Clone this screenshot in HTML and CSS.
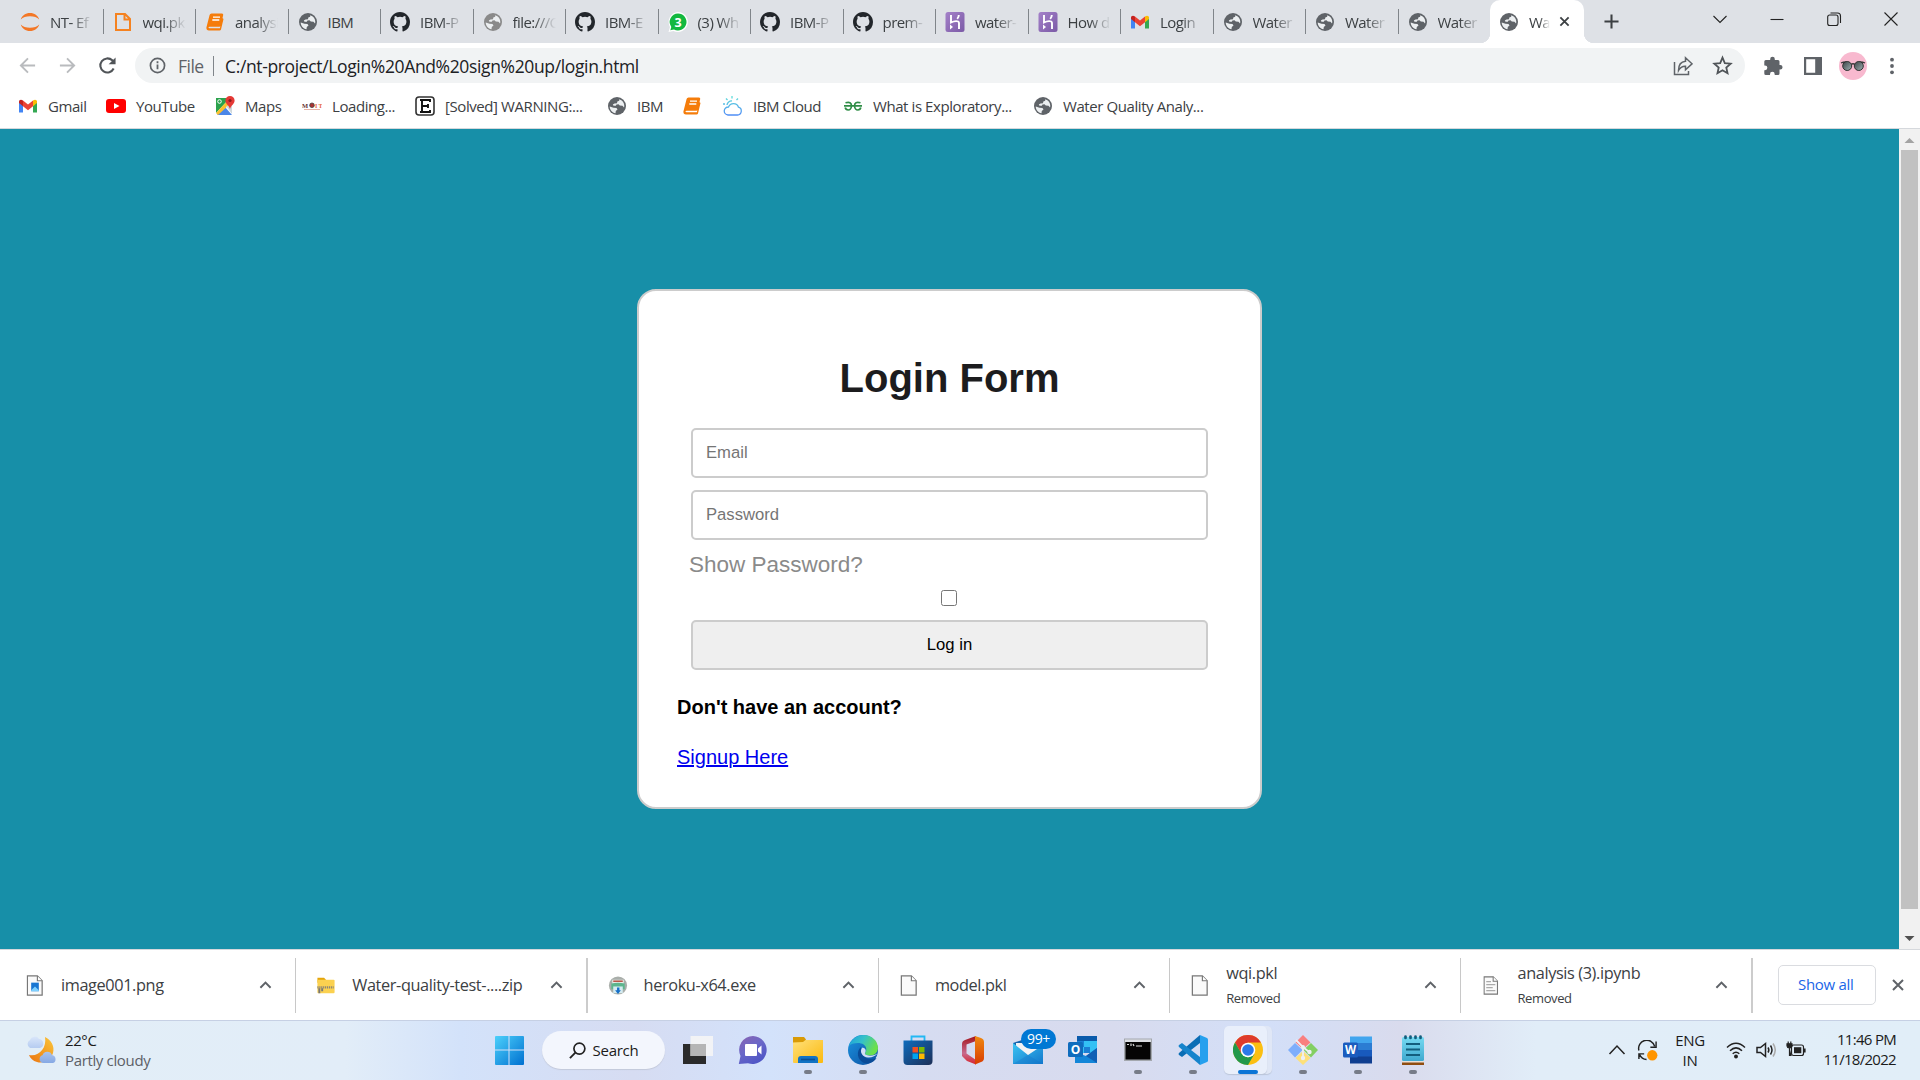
FILE: index.html
```html
<!DOCTYPE html>
<html lang="en">
<head>
<meta charset="utf-8">
<title>Water Quality</title>
<link rel="stylesheet" href="styles.css">
</head>
<body>
<svg class="defs" width="0" height="0" aria-hidden="true">
  <defs>
    <linearGradient id="gWin" x1="0" y1="0" x2="1" y2="1"><stop offset="0" stop-color="#4cd0fb"/><stop offset="1" stop-color="#0070d0"/></linearGradient>
    <linearGradient id="gChat" x1="0" y1="0" x2="0.6" y2="1"><stop offset="0" stop-color="#8a62b0"/><stop offset=".5" stop-color="#6b68c8"/><stop offset="1" stop-color="#4f56c6"/></linearGradient>
    <linearGradient id="gFold" x1="0" y1="0" x2="1" y2="1"><stop offset="0" stop-color="#ffe07a"/><stop offset="1" stop-color="#fbb90e"/></linearGradient>
    <linearGradient id="gEdge" x1="0" y1="0" x2="1" y2=".4"><stop offset="0" stop-color="#1c9fdc"/><stop offset=".5" stop-color="#35c1c9"/><stop offset="1" stop-color="#6be04a"/></linearGradient>
    <linearGradient id="gEdge2" x1="0" y1="0" x2="1" y2="1"><stop offset="0" stop-color="#1b94e0"/><stop offset="1" stop-color="#0c4ea0"/></linearGradient>
    <linearGradient id="gStore" x1="0" y1="0" x2="1" y2="1"><stop offset="0" stop-color="#0f6cbd"/><stop offset="1" stop-color="#1d2f57"/></linearGradient>
    <linearGradient id="gOff" x1="0" y1="0" x2="0" y2="1"><stop offset="0" stop-color="#a3121a"/><stop offset=".6" stop-color="#c76a8e"/><stop offset="1" stop-color="#d9222a"/></linearGradient>
    <linearGradient id="gOff2" x1="0" y1="0" x2="0" y2="1"><stop offset="0" stop-color="#f08a10"/><stop offset="1" stop-color="#d83b01"/></linearGradient>
    <linearGradient id="gMail" x1="0" y1="0" x2="1" y2="1"><stop offset="0" stop-color="#3cc4f2"/><stop offset="1" stop-color="#1378cc"/></linearGradient>
    <linearGradient id="gMoon" x1="1" y1="0" x2="0" y2="1"><stop offset="0" stop-color="#fbc63a"/><stop offset="1" stop-color="#ea7410"/></linearGradient>
    <linearGradient id="gCloud" x1="0" y1="0" x2="0" y2="1"><stop offset="0" stop-color="#d9e6fa"/><stop offset="1" stop-color="#86a9e4"/></linearGradient>
    <linearGradient id="gHer" x1="0" y1="0" x2="1" y2="1"><stop offset="0" stop-color="#a481c9"/><stop offset="1" stop-color="#7b5aa6"/></linearGradient>
    <linearGradient id="gNote" x1="0" y1="0" x2="0" y2="1"><stop offset="0" stop-color="#76daf2"/><stop offset="1" stop-color="#3fa9cf"/></linearGradient>
    <linearGradient id="gIbm" x1="0" y1="0" x2="0" y2="1"><stop offset="0" stop-color="#5ee0d8"/><stop offset="1" stop-color="#4f8df5"/></linearGradient>
    <linearGradient id="gLens" x1="0" y1="0" x2="1" y2="1"><stop offset="0" stop-color="#3b4346"/><stop offset="1" stop-color="#9fb0b2"/></linearGradient>
  </defs>
  <symbol id="globe" viewBox="0 0 20 20"><circle cx="10" cy="10" r="9" fill="currentColor"/><path fill="#eceff1" d="M12.200 3.200C15.500 4 17.300 6.800 17.300 10l-.3 1.500-1.500-1.700-2.700-.3-1.300-1.200-2 .2-.7 1.200H6.500L5.800 8.500l1.700-1 2.500-.3.300-1.700 1.900-.8ZM2.700 10.500l3.800 1.200 3 .3 1 1.500-1.700 1.500-.3 2.300C5.200 16.700 2.900 14 2.700 10.500Z"/></symbol>
  <symbol id="github" viewBox="0 0 16 16"><path fill="#22262b" d="M8 0C3.580 0 0 3.580 0 8c0 3.540 2.290 6.530 5.470 7.590.4.070.55-.17.55-.38 0-.19-.01-.82-.01-1.490-2.010.37-2.530-.49-2.690-.94-.09-.23-.48-.94-.82-1.130-.28-.15-.68-.52-.01-.53.63-.01 1.080.58 1.230.82.72 1.210 1.870.87 2.330.66.070-.52.28-.87.51-1.070-1.780-.2-3.640-.89-3.640-3.950 0-.87.31-1.590.82-2.150-.08-.2-.36-1.020.080-2.120 0 0 .67-.21 2.200.82a7.600 7.600 0 0 1 4 0c1.530-1.040 2.200-.82 2.200-.82.44 1.100.16 1.920.080 2.120.51.56.82 1.270.82 2.150 0 3.070-1.870 3.750-3.650 3.950.29.25.54.73.54 1.480 0 1.070-.01 1.930-.01 2.200 0 .21.15.46.55.38A8 8 0 0 0 16 8c0-4.420-3.580-8-8-8z"/></symbol>
  <symbol id="jupyter" viewBox="0 0 20 20"><path fill="#f37726" d="M.8 7.500C2 3.500 5.500 1 10 1s8 2.500 9.200 6.500C17 5.400 14 4.300 10 4.300S3 5.400.8 7.500ZM.8 12.500C2 16.500 5.500 19 10 19s8-2.500 9.200-6.500C17 14.600 14 15.700 10 15.700S3 14.600.8 12.500Z"/></symbol>
  <symbol id="page" viewBox="0 0 20 20"><path fill="none" stroke="#f58220" stroke-width="2" d="M3 2h9l5 5v11H3ZM11.500 2v5.500H17"/></symbol>
  <symbol id="book" viewBox="0 0 20 20"><path fill="#f57c0a" d="M6.500 1.500h10.500q1.500 0 1.200 1.500L15.800 13.500q-.3 1.300-1.500 1.300H4.500q-1 .1-1 .8 0 .7 1.200.7h10.200L17.500 6l1 1-2.500 10.500Q15.700 18.500 14.500 18.500H4q-2.800-.1-2.600-3L4.600 3Q5 1.500 6.500 1.500Z"/><path stroke="#fff" stroke-width="1.300" d="M8 5.200h7M7.300 8h7"/></symbol>
  <symbol id="gmail" viewBox="0 0 20 20"><path fill="#4285f4" d="M1 5v11.500h4V8Z"/><path fill="#34a853" d="M19 5v11.500h-4V8Z"/><path fill="#fbbc04" d="M15 4.500Q17 3 18.500 4.200 19 4.800 19 6v1l-4 3.200Z"/><path fill="#c5221f" d="M5 4.500Q3 3 1.500 4.200 1 4.800 1 6v1l4 3.200Z"/><path fill="#ea4335" d="m5 4.500 5 4 5-4v5.700l-5 4-5-4Z"/></symbol>
  <symbol id="heroku" viewBox="0 0 20 20"><rect x=".5" width="19" height="20" rx="2.500" fill="url(#gHer)"/><path fill="none" stroke="#fff" stroke-width="1.900" d="M6 3v7.500c3-1.400 8-2.300 8 .5V17M13.800 3c0 1.500-.6 2.700-1.600 3.800"/><path fill="#fff" d="m5 12.500 3 2.400-3 2.500Z"/></symbol>
  <symbol id="whats" viewBox="0 0 20 20"><path fill="#fff" d="M10 0a10 10 0 1 1-4.500 19L.5 20 2 15A10 10 0 0 1 10 0Z"/><path fill="#13b83f" d="M10 1.500a8.500 8.500 0 1 1-4 16L2.300 18.300 3.300 15A8.500 8.500 0 0 1 10 1.500Z"/><text x="10" y="14.500" text-anchor="middle" font-size="12.500" font-weight="700" fill="#fff">3</text></symbol>
  <symbol id="chev" viewBox="0 0 14 10"><path fill="none" stroke="#5f6368" stroke-width="2.100" d="m1.500 8 5.500-5.500L12.500 8"/></symbol>
  <symbol id="doc" viewBox="0 0 18 22"><path fill="#fafafa" stroke="#777" stroke-width="1.300" d="M1 1h10.500L16.500 6v15H1Z"/><path fill="#fff" stroke="#777" stroke-width="1.200" d="M11.500 1v5h5"/></symbol>
</svg>

<div class="tabs">
  <div class="tab"><svg><use href="#jupyter"/></svg><span>NT- Ef</span></div>
  <div class="tab"><svg><use href="#page"/></svg><span>wqi.pk</span></div>
  <div class="tab"><svg><use href="#book"/></svg><span>analysi</span></div>
  <div class="tab"><svg><use href="#globe"/></svg><span class="full">IBM</span></div>
  <div class="tab"><svg><use href="#github"/></svg><span>IBM-P</span></div>
  <div class="tab dim"><svg><use href="#globe"/></svg><span>file:///C</span></div>
  <div class="tab"><svg><use href="#github"/></svg><span>IBM-E</span></div>
  <div class="tab"><svg><use href="#whats"/></svg><span>(3) Wh</span></div>
  <div class="tab"><svg><use href="#github"/></svg><span>IBM-P</span></div>
  <div class="tab"><svg><use href="#github"/></svg><span>prem-</span></div>
  <div class="tab"><svg><use href="#heroku"/></svg><span>water-</span></div>
  <div class="tab"><svg><use href="#heroku"/></svg><span>How d</span></div>
  <div class="tab"><svg><use href="#gmail"/></svg><span>Login</span></div>
  <div class="tab"><svg><use href="#globe"/></svg><span>Water</span></div>
  <div class="tab"><svg><use href="#globe"/></svg><span>Water</span></div>
  <div class="tab last"><svg><use href="#globe"/></svg><span>Water</span></div>
  <div class="tab active"><svg><use href="#globe"/></svg><span>Wa</span><svg class="x" viewBox="0 0 12 12"><path stroke="#3c4043" stroke-width="2" d="m1.500 1.500 9 9m0-9-9 9"/></svg></div>
  <svg class="plus" viewBox="0 0 16 16"><path stroke="#3c4043" stroke-width="2.200" d="M8 .5v15M.5 8h15"/></svg>
  <div class="winbtns">
    <svg viewBox="0 0 16 16"><path d="m1.500 5 6.500 6.500L14.500 5"/></svg>
    <svg viewBox="0 0 16 16"><path d="M1.500 8.500h13"/></svg>
    <svg viewBox="0 0 16 16"><rect x="1.700" y="4" width="10.300" height="10.500" rx="2"/><path d="M4.500 2h7q3 0 3 3v7"/></svg>
    <svg viewBox="0 0 16 16"><path d="m1.500 1.500 13 13m0-13-13 13"/></svg>
  </div>
</div>

<div class="toolbar">
  <svg class="nav" viewBox="0 0 20 20"><path fill="none" stroke="#b9bbbe" stroke-width="2" d="M18 10H3m7.500-7.500L3 10l7.500 7.500"/></svg>
  <svg class="nav" viewBox="0 0 20 20"><path fill="none" stroke="#b9bbbe" stroke-width="2" d="M2 10h15M9.500 2.500 17 10l-7.500 7.500"/></svg>
  <svg class="nav" viewBox="0 0 20 20"><path fill="none" stroke="#505458" stroke-width="2.200" d="M16.500 13.200A7.400 7.400 0 1 1 15 4.600L17 6.500"/><path fill="#505458" d="M18.500 1.500v7.300h-7.300Z"/></svg>
  <div class="omni">
    <svg class="info" viewBox="0 0 18 18"><circle cx="9" cy="9" r="7.500" fill="none" stroke="#5f6368" stroke-width="1.800"/><path stroke="#5f6368" stroke-width="1.900" d="M9 8v5M9 4.600v2"/></svg>
    <span class="file">File</span><i></i><span class="url">C:/nt-project/Login%20And%20sign%20up/login.html</span>
    <svg class="share" viewBox="0 0 20 20"><path fill="none" stroke="#5f6368" stroke-width="1.500" d="M1.500 6v12.500h14V15M12.500 1.800l6.500 6-6.500 6V10.300Q8 10 5.500 14.500 5.500 6 12.500 5.300Z"/></svg>
    <svg class="star" viewBox="0 0 20 20"><path fill="none" stroke="#505458" stroke-width="1.700" d="m10 2.500 2.200 5.200 5.600.5-4.200 3.700 1.200 5.500-4.800-2.900-4.800 2.900 1.200-5.500L2.200 8.200l5.600-.5Z"/></svg>
  </div>
  <svg class="tool" viewBox="0 0 20 20"><path fill="#5f6368" d="M2.800 4h4.400V3a2.300 2.300 0 0 1 4.600 0v1H15q1.500 0 1.500 1.500V9h.8a2.200 2.200 0 0 1 0 4.500h-.8v4q0 1.500-1.500 1.500h-3.300v-.8a2.300 2.300 0 0 0-4.700 0v.8H2.800Q1.300 19 1.300 17.500v-3.300H2a2.300 2.300 0 0 0 0-4.700h-.7v-4Q1.300 4 2.800 4Z"/></svg>
  <svg class="tool" viewBox="0 0 20 20"><path fill="#5f6368" fill-rule="evenodd" d="M1 1h18v18H1ZM3.200 3.200v13.600h9V3.200Z"/></svg>
  <svg class="avatar" viewBox="0 0 28 28"><circle cx="14" cy="14" r="14" fill="#f8b9cf"/><path fill="none" stroke="#3a3a3c" stroke-width="1.300" d="M2 11q2-1 5-1M26 11q-2-1-5-1M12 12.500q2-1.500 4 0"/><circle cx="8.200" cy="14" r="4.500" fill="url(#gLens)" stroke="#333" stroke-width="1"/><circle cx="19.800" cy="14" r="4.500" fill="url(#gLens)" stroke="#333" stroke-width="1"/></svg>
  <svg class="tool dots" viewBox="0 0 20 20"><g fill="#5f6368"><circle cx="10" cy="3.700" r="1.900"/><circle cx="10" cy="10" r="1.900"/><circle cx="10" cy="16.300" r="1.900"/></g></svg>
</div>

<div class="marks">
  <a style="width:88px"><svg><use href="#gmail"/></svg>Gmail</a>
  <a style="width:109px"><svg viewBox="0 0 20 20"><rect y="3" width="20" height="14" rx="3" fill="#f00"/><path fill="#fff" d="m8 7 5.500 3L8 13Z"/></svg>YouTube</a>
  <a style="width:87px"><svg viewBox="0 0 20 20"><path fill="#2ba24c" d="M1 2h14L1 17Z"/><path fill="#4a86e8" d="M2 19 10 11l7 8Z"/><path fill="#fbc02d" d="M1 17 14 3l2 4L3 19Z"/><path fill="#cfd8dc" d="m11 10 6-1v9Z"/><path fill="#e53935" d="M15 0a4.600 4.600 0 0 1 4.600 4.600C19.600 8 16 9.500 15 13c-1-3.500-4.600-5-4.600-8.400A4.600 4.600 0 0 1 15 0Z"/><circle cx="15" cy="4.500" r="1.600" fill="#8e1c1c"/><circle cx="4.500" cy="5.500" r="1.800" fill="none" stroke="#fff"/></svg>Maps</a>
  <a style="width:113px"><svg viewBox="0 0 20 20"><text x="0" y="11.500" font-size="6.500" font-weight="700" fill="#633" textLength="7" font-family="Liberation Serif">M</text><circle cx="10" cy="9.300" r="2.300" fill="#a33" stroke="#444" stroke-width=".8"/><text x="13" y="11.500" font-size="6" font-weight="700" fill="#e5623c" textLength="7" font-family="Liberation Serif">IT</text><path stroke="#e0a090" stroke-width=".8" d="M2 13.500h16"/></svg>Loading...</a>
  <a style="width:192px"><svg viewBox="0 0 20 20"><rect x="1" y="1" width="18" height="18" rx="3" fill="#fff" stroke="#333" stroke-width="1.600"/><path fill="none" stroke="#111" stroke-width="1.900" d="M15 6V4H7v12h8v-2M5 4h3M5 16h3M7 10h6M13 8v4"/></svg>[Solved] WARNING:...</a>
  <a style="width:75px"><svg><use href="#globe"/></svg>IBM</a>
  <a style="width:41px"><svg><use href="#book"/></svg></a>
  <a style="width:120px"><svg viewBox="0 0 20 20"><path fill="none" stroke="url(#gIbm)" stroke-width="1.300" d="M5 19h9.500a4 4 0 0 0 1-7.800A5.300 5.300 0 0 0 5.500 11 4 4 0 0 0 5 19ZM4 9a4.500 4.500 0 0 1 5-4M9 0v2.500M3 2.500l1.500 1.500M15 2.500 13.500 4M0 8h2"/></svg>IBM Cloud</a>
  <a style="width:190px"><svg viewBox="0 0 20 20"><path fill="none" stroke="#2f8d46" stroke-width="1.700" d="M1 9.800h18M2.500 6.800Q8.500 5 8.500 10q-.5 4-3.300 4-2.500-.2-3-2.500M17.500 6.800q-6-1.800-6 3.200.5 4 3.300 4 2.500-.2 3-2.500"/></svg>What is Exploratory...</a>
  <a><svg><use href="#globe"/></svg>Water Quality Analy...</a>
</div>

<div class="view">
  <main>
    <form class="card">
      <h1>Login Form</h1>
      <input type="email" placeholder="Email">
      <input type="password" placeholder="Password">
      <label>Show Password?</label>
      <input type="checkbox">
      <button type="button">Log in</button>
      <h4>Don't have an account?</h4>
      <a href="#">Signup Here</a>
    </form>
  </main>
  <div class="scroll">
    <svg viewBox="0 0 21 21"><path fill="#a3a3a3" d="m10.500 9 5 5h-10Z"/></svg>
    <div class="thumb"></div>
    <svg viewBox="0 0 21 21"><path fill="#505050" d="m10.500 13 5-5h-10Z"/></svg>
  </div>
</div>

<div class="downloads">
  <div class="dl"><svg class="fi" viewBox="0 0 18 22"><use href="#doc"/><rect x="5" y="8" width="8" height="9" fill="#1976d2"/><path fill="#7fd0ff" d="m5 16 4-4 4 4v1H5Z"/></svg><p>image001.png</p><svg class="ch"><use href="#chev"/></svg></div>
  <div class="dl thick"><svg class="fi" viewBox="0 0 20 22"><path fill="#e5a50a" d="M1 3h7l2 2v3H1Z"/><rect x="1" y="5" width="18" height="14" rx="1" fill="#fbd150"/><path stroke="#8a8578" stroke-width="2.500" stroke-dasharray="1.200 .8" d="M1 13h17"/><path stroke="#777" stroke-width="2" d="M3 14v5m3-5v3"/></svg><p>Water-quality-test-....zip</p><svg class="ch"><use href="#chev"/></svg></div>
  <div class="dl"><svg class="fi" viewBox="0 0 20 22"><circle cx="10" cy="11" r="9.500" fill="#a9aeaa"/><path fill="#e9ece8" d="M4 5h12v5H4Z"/><path stroke="#b5483c" stroke-width="1.500" d="M5 6.500h10"/><path fill="#5db58d" d="M3 9q7-2 14 0v6H3Z"/><path fill="#d4ebf0" d="M5 12h10v7H5Z"/><path fill="#1670c8" d="M9 13h2.500v3H13l-3 4-3-4h2Z"/></svg><p>heroku-x64.exe</p><svg class="ch"><use href="#chev"/></svg></div>
  <div class="dl"><svg class="fi"><use href="#doc"/></svg><p>model.pkl</p><svg class="ch"><use href="#chev"/></svg></div>
  <div class="dl"><svg class="fi"><use href="#doc"/></svg><p>wqi.pkl<small>Removed</small></p><svg class="ch"><use href="#chev"/></svg></div>
  <div class="dl thick"><svg class="fi gray" viewBox="0 0 18 22"><use href="#doc"/><path stroke="#aaa" stroke-width="1.300" d="M3.500 6.500H9M3.500 10H14M3.500 13.500H11M3.500 17H14"/></svg><p>analysis (3).ipynb<small>Removed</small></p><svg class="ch"><use href="#chev"/></svg></div>
  <button class="showall" type="button">Show all</button>
  <svg class="close" viewBox="0 0 12 12"><path stroke="#5f6368" stroke-width="2" d="m1 1 10 10m0-10L1 11"/></svg>
</div>

<div class="taskbar">
  <div class="weather">
    <svg viewBox="0 0 32 32"><path fill="url(#gMoon)" d="M20 3c6 3 10 9 8 16s-9 11-16 9c-4-1-7-4-8-7 10 2 18-7 16-18Z"/><path fill="url(#gCloud)" d="M5 14a4.500 4.500 0 0 1 0-8 5 5 0 0 1 9-1 4.600 4.600 0 0 1 1 9ZM18 29a4 4 0 0 1-.5-7.800A5 5 0 0 1 27 21a4.200 4.200 0 0 1 1 8Z"/></svg>
    <div>22°C<em>Partly cloudy</em></div>
  </div>
  <div class="apps">
    <div class="app start"><svg viewBox="0 0 30 30"><path fill="url(#gWin)" d="M1 2q0-1 1-1h12.500v13.500H1Zm14.500-1H29q1 0 1 1v12.500H15.500ZM1 15.500h13.500V30H2q-1 0-1-1Zm14.500 0H30V29q0 1-1 1H15.500Z"/></svg></div>
    <div class="search"><svg viewBox="0 0 18 18"><circle cx="11" cy="7" r="5.800" fill="none" stroke="#222" stroke-width="1.800"/><path stroke="#222" stroke-width="2" d="M7 11 1 17"/></svg>Search</div>
    <div class="app"><svg viewBox="0 0 30 30"><path fill="#2b2b2b" d="M0 9h23v20H0Z"/><path fill="#f5f5f5" opacity=".9" d="M7.500 1H30v20H7.500Z"/><path fill="#b5b5b5" d="M7.500 9H23v12H7.500Z"/></svg></div>
    <div class="app"><svg viewBox="0 0 30 30"><path fill="url(#gChat)" d="M15 1a14 14 0 1 1-5 27.200L.8 29 2.500 21A14 14 0 0 1 15 1Z"/><rect x="7" y="9" width="12" height="12" rx="1" fill="#fff"/><path fill="#fff" d="m20 13.500 3.500-3v9l-3.500-3Z"/></svg></div>
    <div class="app run"><svg viewBox="0 0 30 30"><path fill="#d99a06" d="M0 2h11l2 2.500V8H0Z"/><path fill="url(#gFold)" d="M0 7.500 10 7l2.500-2H30v22q0 1-1 1H1q-1 0-1-1Z"/><path fill="#1173c4" d="M5 28v-4q0-3 3-3h14q3 0 3 3v4Z"/><path stroke="#0a4f94" stroke-width="1.600" d="M8 24.500h14"/></svg></div>
    <div class="app run"><svg viewBox="0 0 30 30"><circle cx="15" cy="15" r="15" fill="url(#gEdge2)"/><path fill="url(#gEdge)" d="M.8 11C3 4.500 9 0 15.500 0 24 0 30 6 30 13c0 4.500-3.500 7.500-8 7.500-3 0-5-1-5-2.300 0-1 1.300-1.500 1.300-4C18.300 10 14 8 10 8 6 8 2.500 9 .8 11Z"/><path fill="#0a4c98" d="M13 12c-5 4-4 13 3 16 5 1.500 10-1 12.500-5-9 3-16-1-15.500-11Z"/><path fill="#d3def5" d="M14.500 12.500c-4 4 .5 10 5.500 10 4 .2 7.800-1.500 9.800-4.500-2 2-4.800 2.700-7.800 2.700-4-.2-5.500-1.800-5-3 1-1.300 1.500-4.300-2.500-5.200Z"/></svg></div>
    <div class="app"><svg viewBox="0 0 30 30"><path fill="none" stroke="#22b8f4" stroke-width="1.800" d="M8.500 7V1.500h13V7"/><path fill="url(#gStore)" d="M.5 5.500h29V26q0 4-4 4h-21q-4 0-4-4Z"/><path fill="#f25022" d="M9.500 12H15v5.500H9.500Z"/><path fill="#7fba00" d="M16 12h5.500v5.500H16Z"/><path fill="#00a4ef" d="M9.500 18.500H15V24H9.500Z"/><path fill="#ffb900" d="M16 18.500h5.500V24H16Z"/></svg></div>
    <div class="app"><svg viewBox="0 0 30 30"><path fill="url(#gOff)" d="M18 1 7 5q-3 1.200-3 4v12l4.500-2.500v-9L18 6ZM4 21l4.500-2.500L18 25v4.500L9 26Z"/><path fill="url(#gOff2)" d="M17 1l6 2q3 1 3 4v16q0 3-3 4l-6 2.500V1Z"/></svg></div>
    <div class="app"><svg viewBox="0 0 30 30"><path fill="#1464ae" d="M0 8 15 3l15 5v8H0Z"/><path fill="#f2f3f5" d="m3 8 24 0-2 8-10 6L3 12Z"/><path fill="url(#gMail)" d="m0 8 15 12L30 10v19H0Z"/><path fill="#1173c8" d="m15 20 15 9H0Z" opacity=".35"/></svg><b class="badge">99+</b></div>
    <div class="app"><svg viewBox="0 0 30 30"><path fill="#0a5bab" d="M9 1h20v6H9Z"/><path fill="#33c1f5" d="M9 6h20v12H9Z"/><path fill="#1b7fd4" d="M9 6h7v6H9ZM16 12h6v6h-6Z"/><path fill="#1386d8" d="M7 17v11h22V13L18 21Z"/><path fill="#0f5fb5" d="m29 13-11 8 11 7Z"/><rect y="7" width="15" height="15" rx="1.500" fill="#0f6cbd"/><text x="7.500" y="18.600" text-anchor="middle" font-size="12" font-weight="700" fill="#fff">O</text></svg></div>
    <div class="app run"><svg viewBox="0 0 30 30"><path fill="#a4a8ae" d="M1 3.500h28V26H1Z"/><path fill="#dcdfe4" d="M2 4.500h26V7H2Z"/><path fill="#050505" d="M2.500 7h25v17.500h-25Z"/><path stroke="#ddd" stroke-width="1.200" d="M4 9.500h2m2-1v2.500m2-2 1 2m2 0h6"/></svg></div>
    <div class="app run"><svg viewBox="0 0 30 30"><path fill="#0a6db5" d="m22 0 0 8L4 22 1 20q-1-1 0-2Z"/><path fill="#1684cc" d="M22 30v-8L4 8 1 10q-1 1 0 2Z"/><path fill="#26a0ee" d="m22 0 7 3q1 .5 1 1.500v21q0 1-1 1.500l-7 3Z"/></svg></div>
    <div class="app run chrome"><svg viewBox="0 0 30 30"><circle cx="15" cy="15" r="15" fill="#fbbf12"/><path fill="#de3b2c" d="M2 7.500A15 15 0 0 1 28 7.500H15L8.500 18.800Z"/><path fill="#22984a" d="M2 7.500A15 15 0 0 0 15 30L21.500 18.800 15 22.500 8.500 18.800Z"/><circle cx="15" cy="15" r="7.300" fill="#fff"/><circle cx="15" cy="15" r="5.800" fill="#2b79e8"/></svg></div>
    <div class="app run"><svg viewBox="0 0 30 30"><path fill="#f97f7f" d="m15 0 7.500 7.500L15 14 7.500 7.500Z"/><path fill="#7eaefb" d="m7 8 7.500 7L7 22.500 0 15Z"/><path fill="#83cf62" d="m23 8 7 7-7 7.500L15.500 15Z"/><path fill="#fde07a" d="m15 16 7.500 7L15 30l-7.500-7Z"/><path fill="none" stroke="#eef0f4" stroke-width="1.800" d="m8 5 7 7v12m0-12 6 5"/><circle cx="15" cy="12" r="2" fill="#eef0f4"/><circle cx="21.500" cy="17" r="2.200" fill="#eef0f4"/><circle cx="15" cy="23" r="2.200" fill="#eef0f4"/></svg></div>
    <div class="app run"><svg viewBox="0 0 30 30"><path fill="#41a5ee" d="M7 1.500h22v7H7Z"/><path fill="#2b7cd3" d="M7 8h22v7H7Z"/><path fill="#185abd" d="M7 15h22v7H7Z"/><path fill="#103f91" d="M7 21.500h22v7H7Z"/><rect y="7.500" width="15" height="15" rx="1.500" fill="#1b5cbe"/><text x="7.500" y="19" text-anchor="middle" font-size="11.500" font-weight="700" fill="#fff">W</text></svg></div>
    <div class="app run"><svg viewBox="0 0 30 30"><path fill="#8f4d10" d="M4 26h22v4H4Z"/><path fill="#e8e0d8" d="M4 25.500h22v2H4Z"/><rect x="4" y="2" width="22" height="24" rx="1.500" fill="url(#gNote)"/><path stroke="#135e7d" stroke-width="2" d="M8 9h14M8 14.500h14M8 20h14"/><path stroke="#135e7d" stroke-width="2.700" stroke-linecap="round" d="M7.500 1.500v1.500M12.500 1.500v1.500M17.500 1.500v1.500M22.500 1.500v1.500"/></svg></div>
  </div>
  <div class="tray">
    <svg class="t1" viewBox="0 0 18 18"><path d="m1.500 13 7.500-8 7.500 8"/></svg>
    <svg class="t2" viewBox="0 0 22 22"><path d="M2 11A8.500 8.500 0 0 1 18.500 6.500M20 1.500v6h-6M2 20v-5.500h5.500M2.500 15Q5 20 10 20.500"/><circle cx="16" cy="16" r="5.400" fill="#ff9500" stroke="none"/></svg>
    <div class="lang">ENG<br>IN</div>
    <svg class="t3" viewBox="0 0 20 18"><path d="M1 6.500Q10-2 19 6.500M4 9.800q6-5.800 12 0M6.700 12.700q3.300-3 6.600 0"/><circle cx="10" cy="15.500" r="1.200" fill="#222"/></svg>
    <svg class="t4" viewBox="0 0 20 18"><path d="M1 6.500h3.500L9.500 2.500v13l-5-4H1ZM12 6.500q1.700 2.500 0 5M14.500 4.500q3 4.500 0 9"/><path stroke="#aaa" d="M17 2.500q4.500 6.500 0 13"/></svg>
    <svg class="t5" viewBox="0 0 20 18"><rect x="5.500" y="4" width="12" height="10.500" rx="2" stroke-width="1.200"/><rect x="8" y="6.200" width="7.300" height="6" fill="#222" stroke="none"/><path fill="#222" stroke-width="1.200" d="M18 8h1v3h-1ZM1 2.800h5V5q-.5 2-2.500 2Q1.300 7 1 5ZM2.200 3V.5M4.800 3V.5M3.500 7v7.500h2"/></svg>
    <div class="clock">11:46 PM<br>11/18/2022</div>
  </div>
</div>
</body>
</html>
```

FILE: styles.css
```css
* { box-sizing: border-box; }
body {
  margin: 0; width: 1920px; height: 1080px; overflow: hidden;
  display: flex; flex-direction: column;
  font-family: "Open Sans", "Noto Sans", sans-serif; font-size: 15px; color: #3c4043;
  background: #fff;
}
.defs { position: absolute; }
svg { flex: none; display: block; }

/* tab strip */
.tabs { height: 43px; background: #dee1e6; display: flex; align-items: center; padding-left: 11px; }
.tab { position: relative; flex: none; width: 92.5px; height: 43px; display: flex; align-items: center; padding-left: 9px; gap: 10px; }
.tab:not(.last):not(.active)::after { content: ""; width: 1px; height: 25px; background: #80858a; position: absolute; right: 0; top: 9px; }
.tab svg { width: 20px; height: 20px; color: #5f6368; }
.tab.dim svg { color: #8a8a8a; }
.tab span { width: 43px; white-space: nowrap; letter-spacing: -.55px; -webkit-mask-image: linear-gradient(90deg, #000 50%, transparent 100%); mask-image: linear-gradient(90deg, #000 50%, transparent 100%); }
.tab span.full { -webkit-mask-image: none; mask-image: none; }
.tab.active { width: 94px; margin-left: -1px; background: #fff; border-radius: 10px 10px 0 0; }
.tab.active::before { content: ""; position: absolute; left: -10px; right: -10px; bottom: 0; height: 10px; background: radial-gradient(circle at 0 0, transparent 10px, #fff 10.500px) left/10px 10px no-repeat, radial-gradient(circle at 100% 0, transparent 10px, #fff 10.500px) right/10px 10px no-repeat; }
.tab.active span { width: 21px; }
.tab.active .x { width: 11px; height: 11px; margin-left: -1px; }
.plus { width: 15px; height: 15px; margin-left: 20px; }
.winbtns { margin-left: auto; padding-right: 21px; display: flex; gap: 41px; height: 38px; align-items: center; align-self: flex-start; }
.winbtns svg { width: 16px; height: 16px; fill: none; stroke: #222; stroke-width: 1.100; }

/* toolbar */
.toolbar { height: 45px; display: flex; align-items: center; padding-left: 18px; }
.nav { width: 19px; height: 19px; margin-right: 21px; }
.omni { flex: none; width: 1610px; height: 35px; border-radius: 18px; background: #f1f3f4; display: flex; align-items: center; padding: 0 12px 0 14px; margin-left: -3px; font-size: 17.500px; }
.info { width: 17px; height: 17px; margin-right: 12px; }
.file { color: #5f6368; width: 35px; letter-spacing: -.5px; }
.omni i { width: 1px; height: 20px; background: #80858a; margin-right: 11px; }
.url { color: #202124; letter-spacing: -.36px; }
.share { width: 20px; height: 20px; margin-left: auto; margin-right: 19px; }
.star { width: 21px; height: 21px; }
.tool { width: 20px; height: 20px; margin-left: 18px; }
.tool + .tool { margin-left: 20px; }
.avatar { width: 28px; height: 28px; margin-left: 16px; }
.tool.dots { margin-left: 15px; }

/* bookmarks */
.marks { height: 41px; display: flex; align-items: center; padding: 0 0 5px 18px; border-bottom: 1px solid #d5d8dc; letter-spacing: -.42px; }
.marks a { flex: none; display: flex; align-items: center; gap: 10px; white-space: nowrap; }
.marks svg { width: 20px; height: 20px; color: #5f6368; }

/* page */
.view { height: 820px; display: flex; }
main { width: 1899px; background: #178fa8; padding-top: 160px; }
.card { font-family: "Liberation Sans", Arial, sans-serif; width: 625px; height: 520px; margin: 0 auto; padding: 64px 38px 0; background: #fff; border: 2px solid #ccc; border-radius: 19px; display: flex; flex-direction: column; color: #000; }
.card h1 { margin: 0 0 27px; font-size: 40px; line-height: 46px; text-align: center; color: #1c1c1e; }
.card input[type=email], .card input[type=password], .card button { flex: none; width: 517px; height: 50px; margin: 0 14px 12px; border: 2px solid #ccc; border-radius: 5px; padding: 0 13px; font: 16.670px "Liberation Sans", Arial, sans-serif; background: #fff; color: #000; }
.card input::placeholder { color: #757575; }
.card label { font-size: 22.500px; line-height: 26px; margin: 0 0 12px 12px; color: #8a8a8a; }
.card input[type=checkbox] { width: 16px; height: 16px; margin: 0 auto 14px; position: relative; left: -1px; }
.card button { background: #efefef; }
.card h4 { margin: 14px 0 27px; font-size: 20px; line-height: 23px; }
.card a { font-size: 20px; line-height: 23px; color: #00e; }
.scroll { width: 21px; background: #f1f1f1; display: flex; flex-direction: column; align-items: center; }
.scroll svg { width: 21px; height: 21px; }
.scroll .thumb { width: 17px; height: 759px; background: #c1c1c1; margin-bottom: auto; }

/* downloads shelf */
.downloads { height: 71px; border-top: 1px solid #d5d8dc; padding-left: 5px; display: flex; align-items: center; }
.dl { flex: none; width: 291.300px; height: 55px; border-right: 1px solid #c8c8c8; display: flex; align-items: center; padding-left: 20px; }
.dl.thick { border-right: 2px solid #ccc; }
.fi { width: 20px; height: 21px; }
.fi.gray { width: 20px; height: 19px; }
.dl p { margin: 0 0 0 16px; width: 198px; font-size: 16.300px; letter-spacing: -.38px; line-height: 20px; white-space: nowrap; }
.dl small { display: block; font-size: 13px; letter-spacing: -.4px; line-height: 16px; margin-top: 7px; }
.dl p:has(small) { margin-top: -1px; }
.ch { width: 13px; height: 10px; }
.showall { width: 98px; height: 40px; margin-left: 25px; border: 1px solid #dadce0; border-radius: 5px; background: #fff; color: #1a66e8; font: 500 15px "Open Sans", "Noto Sans", sans-serif; letter-spacing: -.3px; padding: 0 2px 2px 0; }
.close { width: 12px; height: 12px; margin-left: 16px; }

/* taskbar */
.taskbar { height: 60px; display: flex; align-items: center; color: #1b1b1b; font-size: 15px; border-top: 1px solid #c6d0e4; padding-bottom: 1px; background: linear-gradient(90deg, #e2eef7 0, #e2edf8 18%, #d3e2fa 24%, #d6dcf2 33%, #d3e2fb 40%, #d6dcf1 48%, #d8dbee 58%, #d3dff8 66%, #d9dbed 73%, #e1edf8 80%, #e1eef8 100%); }
.weather { width: 494px; padding-left: 25px; display: flex; align-items: center; gap: 8px; line-height: 20px; letter-spacing: -.4px; margin-top: -1px; }
.weather svg { width: 32px; height: 32px; }
.weather em { display: block; font-style: normal; color: #5c6067; font-size: 15px; letter-spacing: -.35px; }
.apps { display: flex; align-items: center; height: 58px; }
.app { position: relative; flex: none; width: 55px; height: 58px; display: flex; align-items: center; justify-content: center; }
.app.start { width: 30px; margin-right: 18px; }
.app svg { width: 30px; height: 30px; position: relative; }
.search { width: 123px; height: 38px; margin-right: 5px; border-radius: 19px; background: #f3f6fd; box-shadow: 0 1px 1px #c3c9da; display: flex; align-items: center; justify-content: center; gap: 7px; font-size: 15px; letter-spacing: -.25px; }
.search svg { width: 17px; height: 17px; }
.app.run::after { content: ""; position: absolute; left: 24px; bottom: 5px; width: 8px; height: 4px; border-radius: 2px; background: #777c88; }
.app.chrome::before { content: ""; position: absolute; left: 4px; top: 5px; width: 43px; height: 48px; border-radius: 5px; background: #e9effb; box-shadow: 0 1px 1px #bcc6da, 5px 0 0 #e0e7f6, 5px 1px 1px #bcc6da; }
.app.chrome::after { left: 18px; width: 20px; background: #0a74d6; }
.badge { position: absolute; left: 21px; top: 8px; width: 35px; height: 20px; border-radius: 10px; background: #0078d4; color: #fff; font-size: 14px; font-weight: 400; line-height: 20px; text-align: center; letter-spacing: -.3px; }
.tray { margin-left: auto; padding-right: 24px; display: flex; align-items: center; line-height: 20px; font-size: 15px; letter-spacing: -.35px; }
.tray svg { fill: none; stroke: #222; stroke-width: 1.500; }
.t1 { width: 18px; height: 18px; margin-right: 11px; }
.t2 { width: 21px; height: 21px; margin-right: 16px; }
.lang { text-align: center; width: 32px; margin-right: 20px; white-space: nowrap; }
.t3 { width: 20px; height: 18px; margin-right: 10px; }
.t4 { width: 20px; height: 18px; margin-right: 10px; }
.t5 { width: 20px; height: 18px; }
.clock { width: 90px; text-align: right; white-space: nowrap; letter-spacing: -.7px; margin-top: -2px; }
```
